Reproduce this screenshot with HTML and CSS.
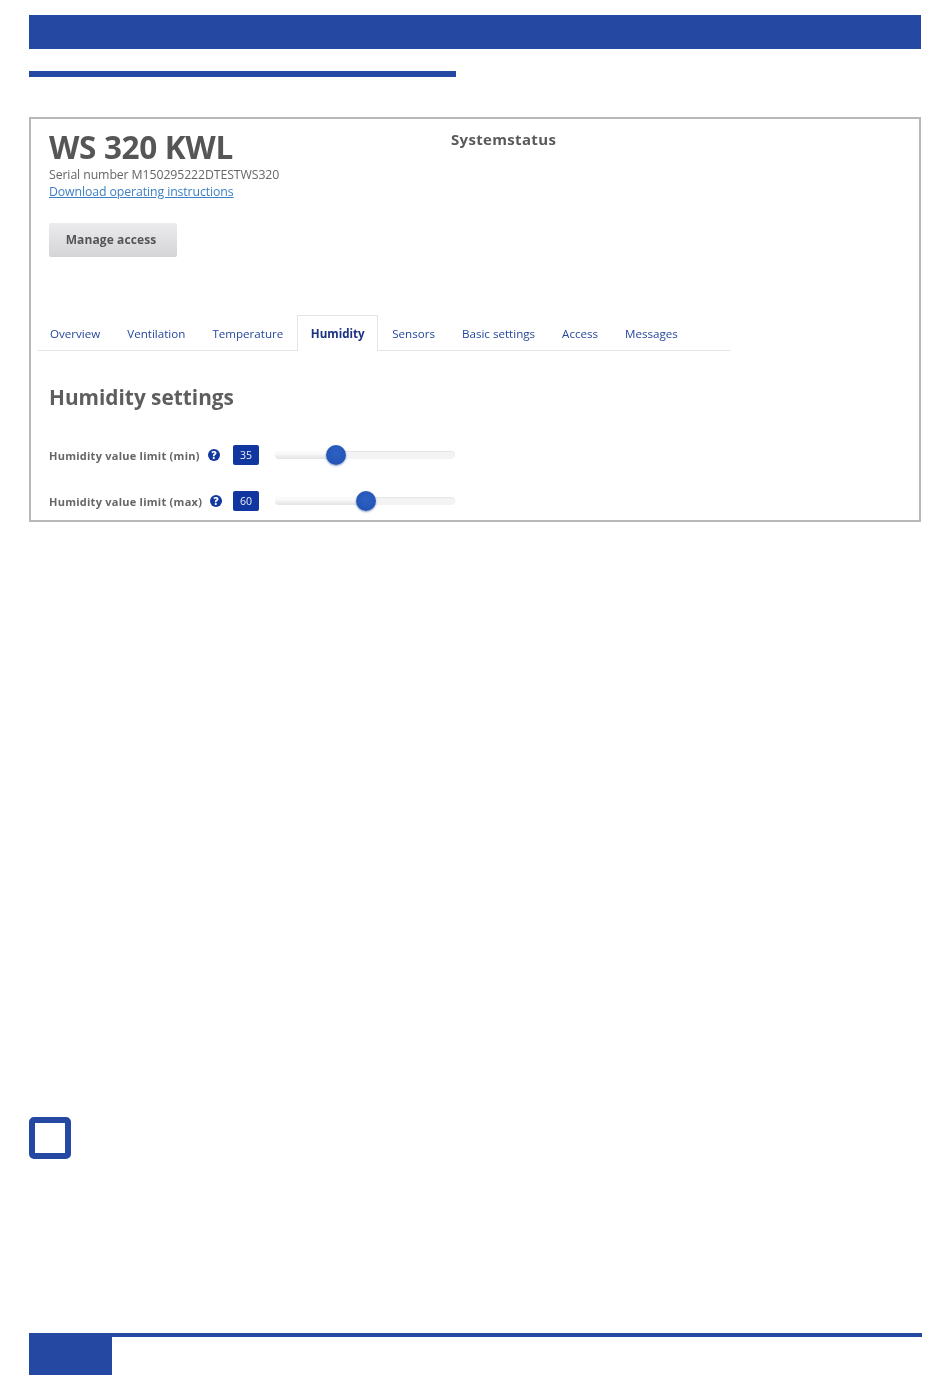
FILE: index.html
```html
<!DOCTYPE html>
<html lang="en">
<head>
<meta charset="utf-8">
<title>WS 320 KWL – Humidity settings</title>
<link rel="stylesheet" href="styles.css">
</head>
<body>
<div class="page">
  <div class="top-bar"></div>
  <div class="sub-bar"></div>
  <section class="shot">
    <header class="head">
      <div class="head-main">
        <h1 class="title">WS 320 KWL</h1>
        <div class="serial">Serial number M150295222DTESTWS320</div>
        <a class="download" href="#">Download operating instructions</a>
        <button class="manage" type="button">Manage access</button>
      </div>
      <div class="status">Systemstatus</div>
    </header>
    <nav class="tabs">
      <a class="tab" href="#">Overview</a>
      <a class="tab" href="#">Ventilation</a>
      <a class="tab" href="#">Temperature</a>
      <a class="tab active" href="#">Humidity</a>
      <a class="tab" href="#">Sensors</a>
      <a class="tab" href="#">Basic settings</a>
      <a class="tab" href="#">Access</a>
      <a class="tab" href="#">Messages</a>
    </nav>
    <h2 class="section-title">Humidity settings</h2>
    <div class="row row-min">
      <span class="label">Humidity value limit (min)</span>
      <span class="help">?</span>
      <span class="value">35</span>
      <div class="slider"><div class="fill" style="width:34%"></div><div class="thumb" style="left:34%"></div></div>
    </div>
    <div class="row row-max">
      <span class="label">Humidity value limit (max)</span>
      <span class="help">?</span>
      <span class="value">60</span>
      <div class="slider"><div class="fill" style="width:50.5%"></div><div class="thumb" style="left:50.5%"></div></div>
    </div>
  </section>
  <div class="note-box"></div>
  <footer class="footer"><div class="page-tab"></div></footer>
</div>
</body>
</html>
```
FILE: styles.css
```css
* { box-sizing: border-box; }
html, body { margin: 0; padding: 0; background: #fff; }
body { font-family: "Open Sans", "Liberation Sans", sans-serif; color: #555; }
.page { width: 950px; height: 1383px; padding: 15px 28px 0 29px; display: flex; flex-direction: column; }
.top-bar { height: 34px; background: #2549a3; margin-right: 1px; }
.sub-bar { width: 427px; height: 6px; margin-top: 22px; background: #2549a3; }
.shot { height: 405px; margin-top: 40px; margin-right: 1px; border: 2px solid #b8b8b8; overflow: hidden; display: flex; flex-direction: column; filter: blur(0.35px); }
.head { display: flex; height: 196px; padding-left: 18px; }
.head-main { width: 402px; display: flex; flex-direction: column; align-items: flex-start; }
.title { margin: 9px 0 0; font-size: 31.5px; line-height: 38px; font-weight: 700; letter-spacing: -0.35px; color: #565656; }
.serial { font-size: 12.3px; line-height: 17px; letter-spacing: -0.1px; color: #666; }
.download { font-size: 12.3px; line-height: 17px; letter-spacing: -0.1px; color: #3d7fc4; text-decoration: underline; }
.manage { margin-top: 23px; width: 128px; height: 34px; padding: 0 4px 2px 0; border: 0; border-radius: 2px; background: linear-gradient(#ececee, #d4d4d6); font-family: inherit; font-size: 12px; font-weight: 700; letter-spacing: 0.1px; color: #555; }
.status { margin-top: 10px; font-size: 15px; line-height: 20px; font-weight: 700; letter-spacing: 0.33px; color: #5a5a5a; }
.tabs { display: flex; width: 692px; height: 36px; margin-left: 7px; border-bottom: 1px solid #e2e4e8; }
.tab { height: 36px; padding: 0 12.5px; border: 1px solid transparent; border-bottom: 0; font-size: 11.6px; line-height: 36px; color: #26479c; text-decoration: none; white-space: nowrap; }
.tab:first-child { padding-left: 11px; }
.tab.active { padding: 0 12px 0 13px; margin-right: 1px; background: #fff; border-color: #e2e4e8; font-weight: 700; color: #1c3282; }
.section-title { margin: 32px 0 0 18px; font-size: 20.8px; line-height: 28px; font-weight: 700; color: #5e5e5e; }
.row { display: flex; align-items: center; height: 22px; padding-left: 18px; }
.row-min { margin-top: 33px; }
.row-max { margin-top: 24px; }
.label { font-size: 11px; font-weight: 700; letter-spacing: 0.25px; color: #666; white-space: nowrap; }
.row-min .label { width: 160px; }
.row-max .label { width: 162px; }
.help { width: 12px; height: 12px; margin-left: -1px; border-radius: 50%; background: #13389f; color: #fff; font-size: 10px; font-weight: 800; line-height: 12px; text-align: center; }
.row-min .value { margin-left: 13px; }
.row-max .value { margin-left: 11px; }
.value { width: 26px; height: 20px; border-radius: 2px; background: #12369f; color: #e8ecf8; font-size: 10.5px; line-height: 20px; text-align: center; }
.slider { position: relative; width: 180px; height: 8px; margin-left: 16px; border-radius: 4px; background: #f3f3f3; box-shadow: inset 0 1px 1px rgba(0,0,0,0.06); }
.fill { height: 8px; border-radius: 4px 0 0 4px; background: linear-gradient(#fafafa 30%, #e3e3e3); }
.thumb { position: absolute; top: -6px; width: 20px; height: 20px; margin-left: -10px; border-radius: 50%; background: radial-gradient(circle at 50% 40%, #2d62c2, #1f4fb0); box-shadow: 0 1px 2px rgba(20,50,140,0.5); }
.note-box { width: 42px; height: 42px; margin-top: 595px; border: 6px solid #2549a3; border-radius: 5px; }
.footer { height: 42px; margin-top: 174px; border-top: 4px solid #2549a3; }
.page-tab { width: 83px; height: 38px; background: #2549a3; }
```
